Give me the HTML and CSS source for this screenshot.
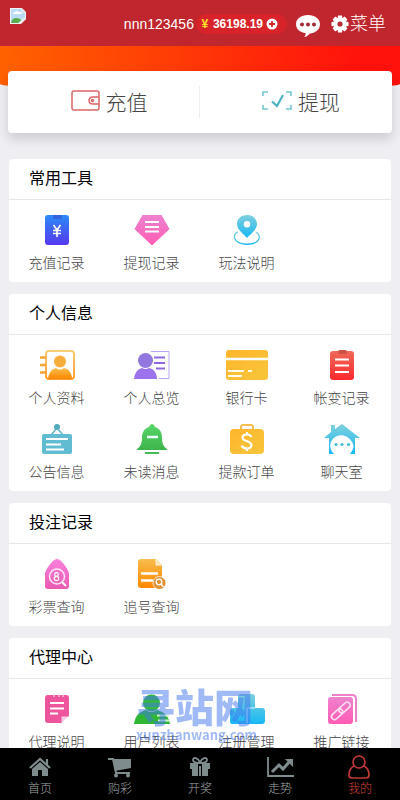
FILE: index.html
```html
<!DOCTYPE html>
<html lang="zh-CN">
<head>
<meta charset="utf-8">
<meta name="viewport" content="width=device-width, initial-scale=1">
<title>我的</title>
<link rel="stylesheet" href="styles.css">
</head>
<body>
<svg class="defs" aria-hidden="true">
  <defs>
    <linearGradient id="blue" x2="0" y2="1"><stop stop-color="#2b8bf8"/><stop offset="1" stop-color="#5538ee"/></linearGradient>
    <linearGradient id="pink" x2="0" y2="1"><stop stop-color="#ee82cf"/><stop offset="1" stop-color="#ff5cb4"/></linearGradient>
    <linearGradient id="rose" x2="0" y2="1"><stop stop-color="#fb80df"/><stop offset="1" stop-color="#e85bb0"/></linearGradient>
    <linearGradient id="cyan" x2="0" y2="1"><stop stop-color="#7fd0dc"/><stop offset="1" stop-color="#16b8f5"/></linearGradient>
    <linearGradient id="orange" x2="0" y2="1"><stop stop-color="#f8bd4c"/><stop offset="1" stop-color="#ff8600"/></linearGradient>
    <linearGradient id="gold" x2="1" y2="1"><stop stop-color="#ffb52c"/><stop offset="1" stop-color="#f7c63b"/></linearGradient>
    <linearGradient id="red" x2="0" y2="1"><stop stop-color="#ee6a59"/><stop offset="1" stop-color="#fc2a2e"/></linearGradient>
    <linearGradient id="green" x2="0" y2="1"><stop stop-color="#57d668"/><stop offset="1" stop-color="#3fb44d"/></linearGradient>
  </defs>
</svg>

<header class="topbar">
  <svg class="logo" viewBox="0 0 16 16" role="img" aria-label="logo"><path d="M0 0h12l4 4v7l-5 5H0z" fill="#f2f5f8"/><path d="M1 1h10l4 4v5l-5 5H1z" fill="#bcdcf5"/><path d="M3 6q0-2 2-2 2-2 4 0 3 0 3 2z" fill="#fff"/><path d="M1 15q1-5 5-5 4 0 6 3l-2 2z" fill="#58ae4c"/><path d="M11 0v5h5z" fill="#dde5ec"/><path d="M16 8l-9 8h3l6-5z" fill="#e8eef2"/></svg>
  <span class="user">nnn123456</span>
  <button class="balance" type="button"><b class="yen">¥</b><b>36198.19</b><svg width="12" height="12" viewBox="0 0 12 12"><circle cx="6" cy="6" r="5.500" fill="#fff"/><path d="M6 3v6M3 6h6" stroke="#d4252b" stroke-width="1.800"/></svg></button>
  <button class="plain chat" type="button" aria-label="消息"><svg width="26" height="24" viewBox="0 0 26 24"><path d="M13 1c7 0 12 4 12 9 0 6-5 9-10 9.500C13 21 12 23 9 23c1-1 2-2 1.500-4C5 18.500 1 15 1 10c0-5 5-9 12-9z" fill="#fff"/><g fill="#a42832"><circle cx="7" cy="10.500" r="2"/><circle cx="13" cy="10.500" r="2"/><circle cx="19" cy="10.500" r="2"/></g></svg></button>
  <button class="plain menu" type="button"><svg width="18" height="18" viewBox="0 0 18 18"><g fill="#fff"><circle cx="9" cy="9" r="6.500"/><path d="M7 .5h4l.5 3.500h-5zM7 17.500h4l.5-3.500h-5zM.5 7v4l3.500.5v-5zM17.500 7v4l-3.500.5v-5z"/><path transform="rotate(45 9 9)" d="M7 .5h4l.5 3.500h-5zM7 17.500h4l.5-3.500h-5zM.5 7v4l3.500.5v-5zM17.500 7v4l-3.500.5v-5z"/></g><circle cx="9" cy="9" r="2.600" fill="#b92a31"/></svg><span>菜单</span></button>
</header>

<main>
  <div class="banner"></div>
  <nav class="actions">
    <a href="#deposit"><svg width="30" height="22" viewBox="0 0 30 22" fill="none" stroke="#dc6766" stroke-width="1.500"><path d="M29 7V3q0-2-2-2H4Q2 1 2 3v15q0 2 2 2h23q2 0 2-2v-4M29 7h-6q-4 0-4 3.500t4 3.500h6z"/><circle cx="22.500" cy="10.500" r="1"/></svg><span>充值</span></a>
    <a href="#withdraw"><svg width="30" height="22" viewBox="0 0 30 22" fill="none" stroke="#74c6d0" stroke-width="1.600"><path d="M1 6V2h5M24 2h5v4M29 15v4h-5M6 19H1v-4"/><path d="M10 11.500l5 4.500 6-11" stroke="#4eb3c4" stroke-width="2.200"/></svg><span>提现</span></a>
  </nav>

  <section class="card">
    <h2>常用工具</h2>
    <div class="grid">
      <a href="#1"><svg class="icon" viewBox="0 0 36 30"><rect x="6" width="24" height="30" rx="3" fill="url(#blue)"/><rect x="14" width="9" height="4" rx="1" fill="#3166dc"/><path d="M14.500 10l3.500 5 3.500-5M18 15v7M14 15.500h8M14 18.500h8" fill="none" stroke="#fff" stroke-width="1.600"/></svg><span>充值记录</span></a>
      <a href="#2"><svg class="icon" viewBox="0 0 36 30"><path d="M9 0h18l8 14-17 16L1 14z" fill="url(#pink)" stroke="url(#pink)" stroke-linejoin="round"/><path d="M11 7h14M11 12h14M11 16.500h14" stroke="#fff" stroke-width="2"/></svg><span>提现记录</span></a>
      <a href="#3"><svg class="icon" viewBox="0 0 36 30"><path d="M9 17c-4 1-4 5-3 7 4 7 21 7 24 0 1-3 0-5-3-7" fill="none" stroke="url(#cyan)" stroke-width="1.300"/><path fill-rule="evenodd" d="M18 0c6 0 10 4 10 9 0 6-7 10-10 14C15 19 8 15 8 9c0-5 4-9 10-9zm0 6a3.200 3.200 0 100 6.400A3.200 3.200 0 0018 6z" fill="url(#cyan)"/></svg><span>玩法说明</span></a>
    </div>
  </section>

  <section class="card">
    <h2>个人信息</h2>
    <div class="grid">
      <a href="#4"><svg class="icon" viewBox="0 0 36 30"><rect x="7" y="1" width="28" height="28" rx="3" fill="none" stroke="url(#orange)" stroke-width="1.600"/><path d="M1 7.500h6M1 15h6M1 22.500h6" stroke="#f5a437" stroke-width="2.500"/><circle cx="21" cy="11.500" r="6" fill="#f5ad3c"/><path d="M9 29c1-7 4-10 8-11q4 3 8 0c5 1 8 5 8 11z" fill="url(#orange)"/></svg><span>个人资料</span></a>
      <a href="#5"><svg class="icon" viewBox="0 0 36 30"><path d="M17 1.500h18v27H25" fill="none" stroke="#b9a4ee" stroke-width="1"/><path d="M20 7.500h11M20 13h11M22 18.500h9" stroke="#8d68dd" stroke-width="2"/><circle cx="11.500" cy="10.500" r="7.500" fill="#9277e0"/><path d="M0 29c1-7 4-10 8-11q3 2 7 0c5 1 8 5 8 11z" fill="#9c72ed"/></svg><span>个人总览</span></a>
      <a href="#6"><svg class="icon wide" viewBox="0 0 42 30"><rect width="42" height="30" rx="3" fill="url(#gold)"/><path d="M0 9h42" stroke="#fff" stroke-width="2.500"/><path d="M2 21h16M22 21h4M2 26h14" stroke="#fffbea" stroke-width="2"/></svg><span>银行卡</span></a>
      <a href="#7"><svg class="icon" viewBox="0 0 36 30"><rect x="6" y="1" width="24" height="29" rx="3" fill="url(#red)"/><rect x="14" width="9" height="4" rx="2" fill="#ce5145"/><path d="M11 9.500h14M11 15.500h14M11 22h14" stroke="#fff" stroke-width="1.800"/></svg><span>帐变记录</span></a>
      <a href="#8"><svg class="icon" viewBox="0 0 36 30"><path d="M12 11l6-7 6 7" fill="none" stroke="#65b8ca" stroke-width="1.600"/><circle cx="18" cy="3" r="3" fill="#53abc0"/><rect x="3" y="10" width="30" height="20" rx="2" fill="#62bcd1"/><path d="M7 15h22M7 20.500h15M7 25.500h18" stroke="#fff" stroke-width="1.800"/></svg><span>公告信息</span></a>
      <a href="#9"><svg class="icon" viewBox="0 0 36 30"><path d="M15 3q1-3 3-3t3 3c5 2 7 5 7 11 0 6 2 9 5 11v1H3v-1c3-2 5-5 5-11 0-6 2-9 7-11z" fill="url(#green)"/><path d="M11 29h14" stroke="#49b954" stroke-width="2"/><path d="M13 13h11" stroke="#eff" stroke-width="2.500"/></svg><span>未读消息</span></a>
      <a href="#10"><svg class="icon" viewBox="0 0 36 30"><path d="M12 6V3q0-2 2-2h8q2 0 2 2v3" fill="none" stroke="#f5bd50" stroke-width="2"/><rect x="1" y="5" width="34" height="25" rx="4" fill="url(#gold)"/><path d="M22.500 13c-1-2-3-2.500-5-2.500-5 0-5.500 5 0 6.500 7 2 6 7.500.5 7.500-3 0-4.500-1-5.500-3M18 8v3M18 24v3" fill="none" stroke="#fff" stroke-width="2.200"/></svg><span>提款订单</span></a>
      <a href="#11"><svg class="icon" viewBox="0 0 36 30"><path d="M0 14L7 8V1h4v4l7-5 18 14h-5v16h-5c3-4 5-8 2-12-5-9-17-9-21 0-2 5 0 9 3 12H5V14z" fill="url(#cyan)"/><g fill="#42bed5"><circle cx="12" cy="20.500" r="1.600"/><circle cx="18" cy="20.500" r="1.600"/><circle cx="24.500" cy="20.500" r="1.600"/></g></svg><span>聊天室</span></a>
    </div>
  </section>

  <section class="card">
    <h2>投注记录</h2>
    <div class="grid">
      <a href="#12"><svg class="icon" viewBox="0 0 36 30"><path d="M14 2q4-4 8 0 6 6 8 12v13q0 3-3 3H9q-3 0-3-3V14Q8 8 14 2z" fill="url(#rose)"/><circle cx="18" cy="17.500" r="7.500" fill="none" stroke="#ffe6fa" stroke-width="1.500"/><g fill="none" stroke="#fff" stroke-width="1.200"><circle cx="17.500" cy="15.500" r="1.800"/><circle cx="17.500" cy="19.500" r="2.200"/></g><path d="M23 23l4 4" stroke="#fff" stroke-width="2"/></svg><span>彩票查询</span></a>
      <a href="#13"><svg class="icon" viewBox="0 0 36 30"><path d="M7 0h15l6 6v22q0 1-3 1H7q-3 0-3-3V3q0-3 3-3z" fill="url(#orange)"/><path d="M22 0v6h6" fill="#fde5b2" stroke="#fff" stroke-width=".8"/><path d="M7 14.500h17M7 21.500h12" stroke="#fff" stroke-width="2.500"/><circle cx="25.500" cy="24" r="6.500" fill="#e39138" stroke="#fff" stroke-width=".8"/><circle cx="25" cy="23" r="2.800" fill="none" stroke="#fff" stroke-width="1.300"/><path d="M27 25l2.500 3" stroke="#fff" stroke-width="1.400"/></svg><span>追号查询</span></a>
    </div>
  </section>

  <section class="card">
    <h2>代理中心</h2>
    <div class="grid">
      <a href="#14"><svg class="icon" viewBox="0 0 36 30"><path d="M9 1h18q3 0 3 3v17l-8 8H9q-3 0-3-3V4q0-3 3-3z" fill="#ee559d"/><path d="M22 29v-7h8" fill="#f9cfe4" stroke="#ee559d"/><path d="M15 0v3M20 0v3M24 0v3" stroke="#ffd8ea" stroke-width="1.200"/><path d="M11 9h14M11 14.500h14M11 19.500h8" stroke="#fff" stroke-width="1.900"/></svg><span>代理说明</span></a>
      <a href="#15"><svg class="icon" viewBox="0 0 36 30"><circle cx="17.500" cy="9" r="8.500" fill="#34b83e"/><path d="M0 30c1-8 5-12 12-14q5 4 11 0c8 2 12 7 13 14z" fill="#2fb635"/><path d="M23 21.500h12M24 26.500h12" stroke="#d1f5cf" stroke-width="1.800"/></svg><span>用户列表</span></a>
      <a href="#16"><svg class="icon" viewBox="0 0 36 30"><path d="M12 0h11q3 0 3 3v11h7q3 0 3 3v10q0 3-3 3H3q-2 0-2-2V17q0-3 3-3h5V3q0-3 3-3z" fill="url(#cyan)"/><path d="M18 29V14h8" fill="none" stroke="#dcfaff"/></svg><span>注册管理</span></a>
      <a href="#17"><svg class="icon" viewBox="0 0 36 30"><path d="M8 1h20q4 0 4 4v23" fill="none" stroke="#ed80c7" stroke-width="2"/><rect x="4" y="3" width="25" height="27" rx="3" fill="url(#pink)"/><g fill="none" stroke="#ffe2f4" stroke-width="1.500" transform="rotate(-42 16.500 16.500)"><rect x="5" y="14" width="13" height="6" rx="3"/><rect x="15" y="14" width="13" height="6" rx="3"/></g></svg><span>推广链接</span></a>
    </div>
  </section>
</main>

<div class="watermark"><strong>寻站网</strong><span>xunzhanwang.com</span></div>

<nav class="tabs">
  <a href="#home"><svg viewBox="0 0 28 24"><path d="M4 13L14 4l10 9M21 10V4" fill="none" stroke="#7f8c8d" stroke-width="2.200"/><path d="M14 7l8 7v7h-6v-6h-4v6H6v-7z" fill="#7f8c8d"/></svg><span>首页</span></a>
  <a href="#buy"><svg viewBox="0 0 28 24"><path d="M7 4h18v9L9 16z" fill="#7f8c8d"/><path d="M2 4h5l3 14h14" fill="none" stroke="#7f8c8d" stroke-width="2"/><g fill="#7f8c8d"><circle cx="10" cy="20.500" r="2"/><circle cx="22" cy="20.500" r="2"/></g></svg><span>购彩</span></a>
  <a href="#draw"><svg viewBox="0 0 28 24"><path d="M4 8h8v13H6v-7H4zM16 8h8v6h-2v7h-6zM13 11h2v10h-2z" fill="#7f8c8d"/><path d="M14 8c-2-6-7-6-7-3 0 3 4 3 7 3zM14 8c2-6 7-6 7-3 0 3-4 3-7 3z" fill="none" stroke="#7f8c8d" stroke-width="1.800"/></svg><span>开奖</span></a>
  <a href="#trend"><svg viewBox="0 0 28 24"><path d="M2 2v19h26" fill="none" stroke="#7f8c8d" stroke-width="1.800"/><path d="M6 17l7-7 4 4 7-8" fill="none" stroke="#7f8c8d" stroke-width="3"/><path d="M19 4h8v8z" fill="#7f8c8d"/></svg><span>走势</span></a>
  <a class="active" href="#me"><svg viewBox="0 0 28 24"><g fill="none" stroke="#c23a35" stroke-width="1.700"><circle cx="13" cy="7" r="6"/><path d="M8 11c-4 2-5 5-5 9q0 3 3 3h14q3 0 3-3c0-4-1-7-5-9"/></g></svg><span>我的</span></a>
</nav>
</body>
</html>
```
FILE: styles.css
```css
* { box-sizing: border-box; }
body {
  margin: 0;
  background: #eeeef3;
  color: #444;
  font-family: "Liberation Sans", "Noto Sans CJK SC", sans-serif;
  font-weight: 300;
}
a { color: inherit; text-decoration: none; }
button { border: 0; margin: 0; padding: 0; background: none; color: #fff; font: inherit; }
.defs { position: absolute; width: 0; height: 0; }

.topbar {
  display: flex;
  align-items: center;
  height: 46px;
  padding: 2px 14px 0 10px;
  background: #c0262d;
  color: #fff;
}
.logo { width: 16px; height: 16px; margin: 0 auto 16px 0; }
.user { font-size: 14px; }
.balance {
  display: flex;
  align-items: center;
  gap: 3px;
  height: 20px;
  margin-left: 2px;
  padding: 0 9px 0 4px;
  border-radius: 10px;
  background: #d9232a;
  font-size: 12px;
}
.balance b { font-weight: 700; }
.balance .yen { width: 10px; color: #ffdf2e; }
.plain { display: flex; align-items: center; }
.chat { margin: 4px 10px 0 8px; }
.menu { gap: 1px; font-size: 18px; line-height: 24px; }

main { padding: 0 9px 60px; }
.banner {
  height: 44px;
  margin: 0 -9px;
  border-radius: 0 0 50% 50% / 0 0 6px 6px;
  background: linear-gradient(100deg, #ff6200, #ff110c 90%);
}
.actions {
  position: relative;
  display: grid;
  grid-template-columns: 1fr 1fr;
  align-items: center;
  height: 62px;
  margin: -19px -1px 26px;
  border-radius: 4px;
  background: #fff;
  box-shadow: 0 6px 12px rgba(0, 0, 0, .14);
  font-size: 21px;
}
.actions a {
  display: flex;
  align-items: center;
  justify-content: center;
  gap: 6px;
  height: 32px;
  padding: 0 0 2px 10px;
}
.actions a:first-child { border-right: 1px solid #eee; }

.card { margin-bottom: 12px; border-radius: 4px; background: #fff; }
.card h2 {
  margin: 0;
  padding: 0 20px;
  border-bottom: 1px solid #e7e7e9;
  color: #000;
  font-size: 16px;
  font-weight: 400;
  line-height: 40px;
}
.grid { display: grid; grid-template-columns: repeat(4, 1fr); padding: 4px 2px 4px 0; }
.grid a {
  display: flex;
  flex-direction: column;
  align-items: center;
  gap: 8px;
  height: 74px;
  padding-top: 11px;
  font-size: 14px;
  line-height: 20px;
}
.icon { width: 36px; height: 30px; }
.icon.wide { width: 42px; }

.watermark {
  position: fixed;
  bottom: 58px;
  left: 34%;
  display: flex;
  flex-direction: column;
  color: rgba(65, 115, 240, .5);
  font-weight: 900;
  pointer-events: none;
}
.watermark strong { font-size: 39px; font-weight: 900; line-height: 38px; }
.watermark span { font-family: "Noto Sans CJK SC", sans-serif; font-size: 13px; font-weight: 700; line-height: 14px; }

.tabs {
  position: fixed;
  right: 0;
  bottom: 0;
  left: 0;
  display: flex;
  height: 52px;
  background: #000;
  color: #a0a8a9;
  font-size: 12px;
  line-height: 16px;
}
.tabs a {
  display: flex;
  flex: 1;
  flex-direction: column;
  align-items: center;
  padding-top: 7px;
  gap: 2px;
}
.tabs svg { width: 28px; height: 24px; }
.tabs .active { color: #d8403a; }
```
